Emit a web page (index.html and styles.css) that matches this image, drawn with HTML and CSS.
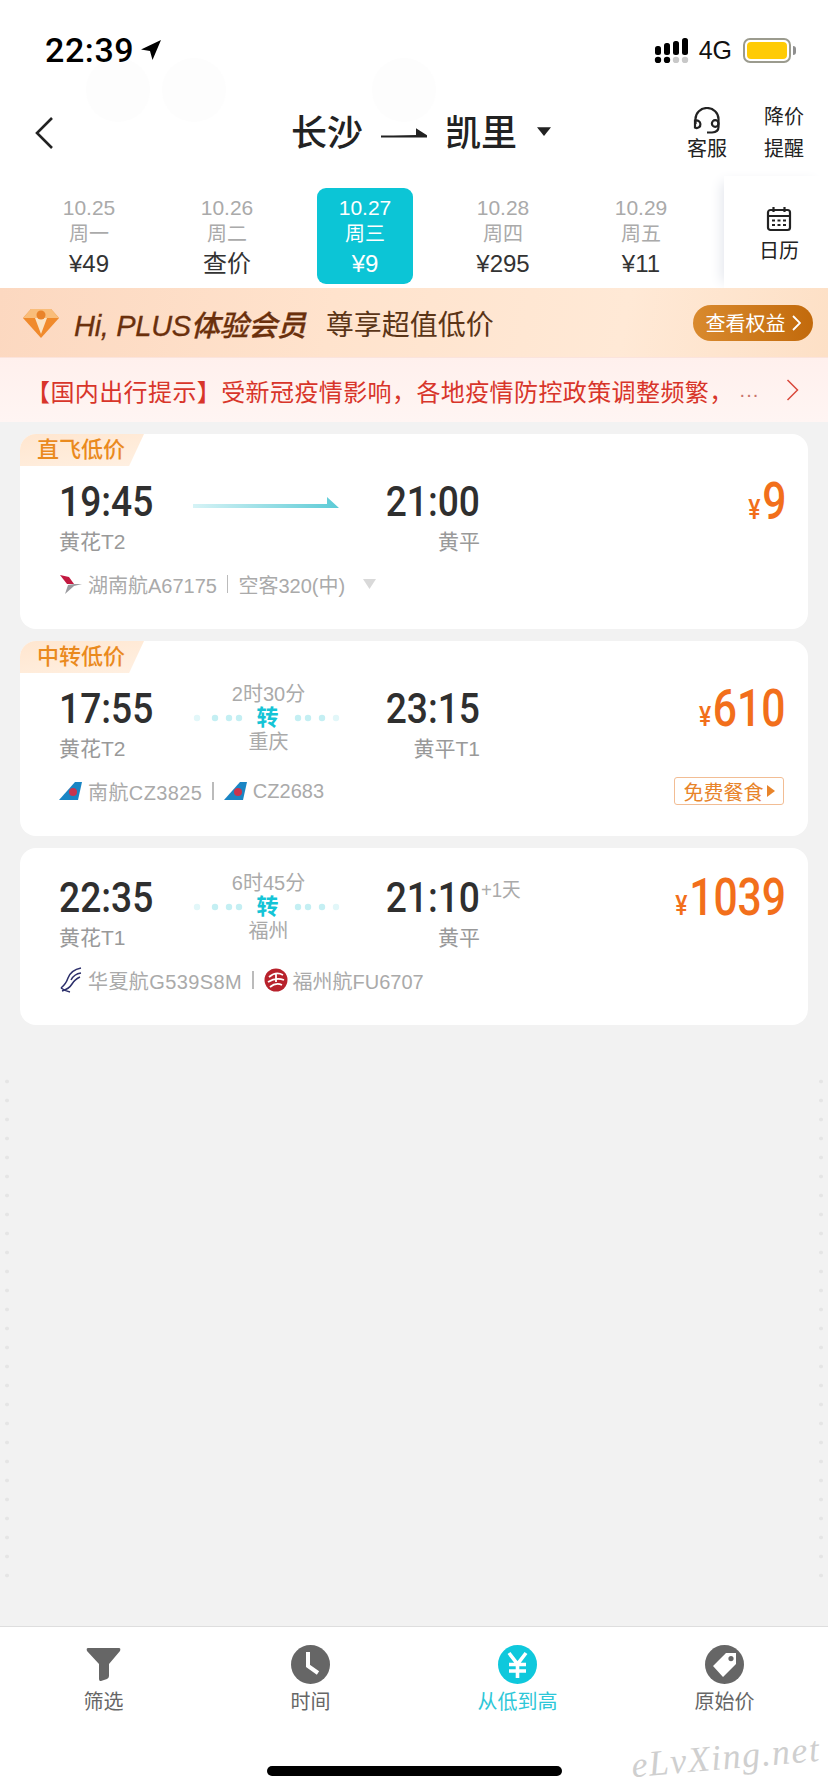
FILE: index.html
```html
<!DOCTYPE html>
<html lang="zh-CN">
<head>
  <meta charset="UTF-8">
  <title>长沙 - 凯里</title>
  <meta name="viewport" content="width=device-width, initial-scale=1">
  <link rel="stylesheet" href="styles.css">
</head>
<body>
  <div class="ghost ghost-a"></div>
  <div class="ghost ghost-b"></div>
  <div class="ghost ghost-c"></div>

  <div class="status-bar">
    <div class="status-left">
      <span class="clock">22:39</span>
      <svg class="loc-arrow" width="22" height="22" viewBox="0 0 22 22"><path d="M21 1 L1 10.5 L10 12 L12.5 21 Z" fill="#000"/></svg>
    </div>
    <div class="status-right">
      <svg width="36" height="26" viewBox="0 0 36 26">
        <rect x="1" y="9" width="6" height="9" rx="2.5" fill="#000"/>
        <rect x="10" y="6" width="6" height="12" rx="2.5" fill="#000"/>
        <rect x="19" y="4" width="6" height="14" rx="2.5" fill="#000"/>
        <rect x="28" y="1" width="6" height="17" rx="2.5" fill="#000"/>
        <circle cx="4" cy="23" r="3.2" fill="#000"/>
        <circle cx="13" cy="23" r="3.2" fill="#000"/>
        <circle cx="22" cy="23" r="3.2" fill="#c8c8c8"/>
        <circle cx="31" cy="23" r="3.2" fill="#c8c8c8"/>
      </svg>
      <span class="net">4G</span>
      <div class="battery"><div class="battery-fill"></div></div>
      <div class="battery-nub"></div>
    </div>
  </div>

  <header class="nav-header">
    <svg class="back" width="20" height="34" viewBox="0 0 20 34"><path d="M18 2 L3 17 L18 32" fill="none" stroke="#222" stroke-width="2.6"/></svg>
    <div class="route">
      <span>长沙</span>
      <svg width="46" height="14" viewBox="0 0 46 14"><path d="M0 9.5 H46 L36 3 V8" fill="#222" stroke="#222" stroke-width="2"/></svg>
      <span>凯里</span>
      <svg class="route-caret" width="14" height="11" viewBox="0 0 16 12"><path d="M0 1 H16 L8 11 Z" fill="#222"/></svg>
    </div>
    <div class="header-actions">
      <div class="action">
        <svg width="30" height="28" viewBox="0 0 30 28" fill="none" stroke="#222" stroke-width="2.2">
          <path d="M3.5 17 V12 A11.5 11 0 0 1 26.5 12 V20 Q26.5 25 20 25.5 H15"/>
          <path d="M3 12.5 V20.5 A3.6 3.6 0 0 0 8.4 17 A3.6 3.6 0 0 0 3 14"/>
          <circle cx="23.2" cy="16.5" r="3.3"/>
        </svg>
        <span>客服</span>
      </div>
      <div class="action action-text">
        <span>降价</span>
        <span>提醒</span>
      </div>
    </div>
  </header>

  <div class="date-strip">
    <div class="date-list">
      <div class="date-item"><span class="d">10.25</span><span class="w">周一</span><span class="p">¥49</span></div>
      <div class="date-item"><span class="d">10.26</span><span class="w">周二</span><span class="p">查价</span></div>
      <div class="date-item active"><span class="d">10.27</span><span class="w">周三</span><span class="p">¥9</span></div>
      <div class="date-item"><span class="d">10.28</span><span class="w">周四</span><span class="p">¥295</span></div>
      <div class="date-item"><span class="d">10.29</span><span class="w">周五</span><span class="p">¥11</span></div>
    </div>
    <div class="calendar">
      <svg width="26" height="26" viewBox="0 0 26 26" fill="none" stroke="#222" stroke-width="2.2">
        <rect x="2" y="4" width="22" height="20" rx="2.5"/>
        <path d="M2 10 H24 M7.5 1 V6 M18.5 1 V6"/>
        <path d="M6 14.5 H9 M11.5 14.5 H14.5 M17 14.5 H20 M6 19 H9 M11.5 19 H14.5 M17 19 H20" stroke-width="2"/>
      </svg>
      <span>日历</span>
    </div>
  </div>

  <div class="plus-banner">
    <svg class="gem" width="38" height="32" viewBox="0 0 38 32">
      <path d="M9 2 H29 L37 11 L19 31 L1 11 Z" fill="#f08a2c"/>
      <path d="M9 2 H29 L37 11 H1 Z" fill="#f9bd7a"/>
      <path d="M13 11 L19 27 L25 11 Z" fill="#fbe3c4"/>
      <circle cx="19" cy="8" r="4.5" fill="#e9832a"/>
    </svg>
    <span class="plus-hi">Hi, PLUS体验会员</span>
    <span class="plus-msg">尊享超值低价</span>
    <div class="plus-btn">查看权益
      <svg width="9" height="16" viewBox="0 0 9 16"><path d="M1 1 L8 8 L1 15" fill="none" stroke="#fff" stroke-width="1.8"/></svg>
    </div>
  </div>

  <div class="notice">
    <span class="notice-text">【国内出行提示】受新冠疫情影响，各地疫情防控政策调整频繁，</span>
    <span class="notice-more">...</span>
    <svg width="13" height="22" viewBox="0 0 13 22"><path d="M1.5 1 L11.5 11 L1.5 21" fill="none" stroke="#d9493c" stroke-width="1.5"/></svg>
  </div>

  <main class="flights">
    <div class="card tagged">
      <div class="tag">直飞低价</div>
      <div class="row">
        <div class="dep"><div class="time">19:45</div><div class="place">黄花T2</div></div>
        <div class="mid mid-direct">
          <svg width="147" height="14" viewBox="0 0 147 14"><defs><linearGradient id="arrowFade"><stop offset="0" stop-color="#d6f3f6"/><stop offset="1" stop-color="#5ccbd6"/></linearGradient></defs><path d="M0 8 H134 V1 L146 12 H0 Z" fill="url(#arrowFade)"/></svg>
        </div>
        <div class="arr"><div class="time">21:00</div><div class="place">黄平</div></div>
        <div class="price"><span class="price-num"><small>¥</small>9</span></div>
      </div>
      <div class="carrier">
        <svg class="logo" width="24" height="22" viewBox="0 0 24 22"><path d="M1 2 L10 4 L15 11 L8 11 Z" fill="#c2183f"/><path d="M6 21 L9 12 L15 11 L23 11 L15 13 Z" fill="#9a9a9f"/></svg>
        <span>湖南航A67175</span><i class="sep"></i><span>空客320(中)</span>
        <svg class="caret" width="13" height="10" viewBox="0 0 13 10"><path d="M0 0 H13 L6.5 10 Z" fill="#d9d9d9"/></svg>
      </div>
    </div>

    <div class="card tagged">
      <div class="tag">中转低价</div>
      <div class="row">
        <div class="dep"><div class="time">17:55</div><div class="place">黄花T2</div></div>
        <div class="mid">
          <div class="duration">2时30分</div>
          <div class="via">
            <svg width="50" height="8" viewBox="0 0 50 8"><circle cx="4" cy="4" r="3.2" fill="#e2f7f9"/><circle cx="22" cy="4" r="3.2" fill="#c4eff3"/><circle cx="36" cy="4" r="3.2" fill="#c4eff3"/><circle cx="46" cy="4" r="3.2" fill="#c4eff3"/></svg>
            <b>转</b>
            <svg width="46" height="8" viewBox="0 0 46 8"><circle cx="4" cy="4" r="3.2" fill="#c4eff3"/><circle cx="14" cy="4" r="3.2" fill="#c4eff3"/><circle cx="28" cy="4" r="3.2" fill="#c4eff3"/><circle cx="42" cy="4" r="3.2" fill="#e2f7f9"/></svg>
          </div>
          <div class="city">重庆</div>
        </div>
        <div class="arr"><div class="time">23:15</div><div class="place">黄平T1</div></div>
        <div class="price"><span class="price-num"><small>¥</small>610</span></div>
      </div>
      <div class="carrier">
        <svg class="logo" width="24" height="20" viewBox="0 0 24 20"><path d="M0 19 L16 1 H23 L19 19 Z" fill="#1a85c4"/><circle cx="14" cy="11" r="4" fill="#c9344d"/></svg>
        <span class="wide">南航CZ3825</span><i class="sep"></i>
        <svg class="logo" width="24" height="20" viewBox="0 0 24 20"><path d="M0 19 L16 1 H23 L19 19 Z" fill="#1a85c4"/><circle cx="14" cy="11" r="4" fill="#c9344d"/></svg>
        <span>CZ2683</span>
        <div class="meal">免费餐食<svg width="8" height="12" viewBox="0 0 8 12"><path d="M0 0 L8 6 L0 12 Z" fill="#e8842a"/></svg></div>
      </div>
    </div>

    <div class="card">
      <div class="row">
        <div class="dep"><div class="time">22:35</div><div class="place">黄花T1</div></div>
        <div class="mid">
          <div class="duration">6时45分</div>
          <div class="via">
            <svg width="50" height="8" viewBox="0 0 50 8"><circle cx="4" cy="4" r="3.2" fill="#e2f7f9"/><circle cx="22" cy="4" r="3.2" fill="#c4eff3"/><circle cx="36" cy="4" r="3.2" fill="#c4eff3"/><circle cx="46" cy="4" r="3.2" fill="#c4eff3"/></svg>
            <b>转</b>
            <svg width="46" height="8" viewBox="0 0 46 8"><circle cx="4" cy="4" r="3.2" fill="#c4eff3"/><circle cx="14" cy="4" r="3.2" fill="#c4eff3"/><circle cx="28" cy="4" r="3.2" fill="#c4eff3"/><circle cx="42" cy="4" r="3.2" fill="#e2f7f9"/></svg>
          </div>
          <div class="city">福州</div>
        </div>
        <div class="arr"><div class="time">21:10<span class="plus-day">+1天</span></div><div class="place">黄平</div></div>
        <div class="price"><span class="price-num"><small>¥</small>1039</span></div>
      </div>
      <div class="carrier">
        <svg class="logo" width="24" height="26" viewBox="0 0 24 26" fill="none" stroke="#2c2f6b" stroke-width="1.5"><path d="M22 1 Q12 3 9 11 Q7 17 2 21"/><path d="M22 6 Q15 7 12 13"/><path d="M21 10 Q16 12 13 17 Q10 22 3 24"/><path d="M2 21 Q6 24 11 25"/></svg>
        <span class="wide">华夏航G539S8M</span><i class="sep"></i>
        <svg class="logo" width="24" height="24" viewBox="0 0 24 24"><circle cx="12" cy="12" r="11.5" fill="#b8222c"/><path d="M5 9 Q12 3 19 7 M4 14 Q12 9 20 12 M6 19 Q12 14 18 17 M12 5 V14" fill="none" stroke="#fff" stroke-width="1.8"/></svg>
        <span>福州航FU6707</span>
      </div>
    </div>
  </main>

  <footer class="bottom">
    <div class="tabs">
      <div class="tab">
        <svg width="39" height="39" viewBox="0 0 39 39"><path d="M4 3 H35 Q37 3 36 6 L25 19 V31 Q25 33 23 34 L17 36 Q15 36.5 15 34 V19 L3 6 Q2 3 4 3 Z" fill="#666"/></svg>
        <span>筛选</span>
      </div>
      <div class="tab">
        <svg width="39" height="39" viewBox="0 0 39 39"><circle cx="19.5" cy="19.5" r="19.5" fill="#666"/><path d="M17 7 V21 L27 28" fill="none" stroke="#fff" stroke-width="4"/></svg>
        <span>时间</span>
      </div>
      <div class="tab on">
        <svg width="39" height="39" viewBox="0 0 39 39"><circle cx="19.5" cy="19.5" r="19.5" fill="#0fc8dc"/><path d="M11 8 L19.5 19 L28 8 M11 19.5 H28 M11 26 H28 M19.5 19 V33" fill="none" stroke="#fff" stroke-width="3.6"/></svg>
        <span>从低到高</span>
      </div>
      <div class="tab">
        <svg width="39" height="39" viewBox="0 0 39 39"><circle cx="19.5" cy="19.5" r="19.5" fill="#666"/><path d="M21 8 H31 V19 L18 32 L8 21 Z M26 11 A2.6 2.6 0 1 0 26 16.2 A2.6 2.6 0 1 0 26 11 Z" fill="#fff" fill-rule="evenodd"/></svg>
        <span>原始价</span>
      </div>
    </div>
    <div class="home-bar"></div>
    <div class="watermark">eLvXing.net</div>
  </footer>
</body>
</html>
```
FILE: styles.css
```css
* { box-sizing: border-box; }

body {
  margin: 0;
  width: 828px;
  height: 100vh;
  display: flex;
  flex-direction: column;
  position: relative;
  overflow: hidden;
  background: #fff;
  color: #222;
  font-family: "Liberation Sans", "Noto Sans CJK SC", sans-serif;
}

.ghost {
  position: absolute;
  top: 58px;
  width: 64px;
  height: 64px;
  border-radius: 50%;
  background: #fdfdfd;
}
.ghost-a { left: 86px; }
.ghost-b { left: 162px; }
.ghost-c { left: 372px; }

.status-bar {
  position: relative;
  height: 84px;
  padding: 32px 32px 0 45px;
  display: flex;
  justify-content: space-between;
  align-items: flex-start;
}
.status-left { display: flex; align-items: center; gap: 6px; }
.clock {
  font-family: Roboto, sans-serif;
  font-weight: 500;
  font-size: 34px;
  line-height: 36px;
  letter-spacing: 0.6px;
  color: #000;
}
.status-right { display: flex; align-items: center; padding-top: 4px; }
.net {
  font-size: 25px;
  line-height: 28px;
  margin: 0 11px 0 9px;
  color: #111;
}
.battery {
  width: 48px;
  height: 25px;
  border: 2px solid #9b9b8e;
  border-radius: 7px;
  padding: 2px;
}
.battery-fill { height: 100%; border-radius: 4px; background: #ffcb05; }
.battery-nub {
  width: 3px;
  height: 9px;
  margin-left: 2px;
  background: #8f8f8f;
  border-radius: 0 3px 3px 0;
}

.nav-header {
  position: relative;
  height: 92px;
  padding: 6px 24px 0 34px;
  display: flex;
  align-items: center;
}
.route {
  margin: 2px 0 0 237px;
  display: flex;
  align-items: center;
  font-size: 36px;
  font-weight: 500;
  line-height: 44px;
  color: #222;
}
.route svg { margin: 0 18px 0 18px; }
.route .route-caret { margin: 0 0 6px 20px; }
.header-actions { margin-left: auto; display: flex; gap: 37px; align-items: flex-end; }
.action {
  display: flex;
  flex-direction: column;
  align-items: center;
  font-size: 20px;
  line-height: 28px;
  color: #222;
}
.action-text { gap: 4px; }

.date-strip { height: 112px; display: flex; }
.date-list { display: flex; flex: 1; padding: 12px 0 4px 20px; }
.date-item {
  width: 138px;
  display: flex;
  flex-direction: column;
  align-items: center;
  padding-top: 7px;
  color: #aaa;
  font-size: 20px;
}
.date-item .d { font-size: 21px; line-height: 26px; }
.date-item .w { line-height: 26px; }
.date-item .p { font-size: 24px; line-height: 32px; color: #333; margin-top: 1px; }
.date-item.active {
  width: 96px;
  margin: 0 21px;
  background: #0cc5d6;
  border-radius: 9px;
  color: #fff;
}
.date-item.active .p { color: #fff; }
.calendar {
  width: 104px;
  display: flex;
  flex-direction: column;
  align-items: center;
  padding: 30px 0 0 6px;
  gap: 5px;
  font-size: 20px;
  line-height: 28px;
  box-shadow: -8px 0 12px -6px #e2e5ec;
  color: #222;
}

.plus-banner {
  height: 69px;
  padding: 0 15px 0 22px;
  display: flex;
  align-items: center;
  background: linear-gradient(100deg, #fcd8c0 0%, #ffe3cd 40%, #ffe9d6 75%, #fde0c6 100%);
}
.plus-hi {
  margin-left: 14px;
  font-size: 29px;
  font-style: italic;
  font-weight: 500;
  color: #6b300c;
  letter-spacing: -0.3px;
  -webkit-text-stroke: 0.3px #6b300c;
}
.plus-msg { margin-left: 20px; font-size: 28px; color: #5b3517; }
.plus-btn {
  margin-left: auto;
  height: 36px;
  width: 120px;
  border-radius: 18px;
  background: linear-gradient(90deg, #d98a2e, #c26a0c);
  color: #fff;
  font-size: 20px;
  display: flex;
  align-items: center;
  justify-content: center;
  gap: 6px;
}

.notice {
  height: 65px;
  padding: 0 29px 0 26px;
  display: flex;
  align-items: center;
  background: linear-gradient(180deg, #fff0ed, #fff5f3);
  border-top: 1px solid #fbe3dc;
  color: #d8352a;
  font-size: 24px;
}
.notice-text { white-space: nowrap; letter-spacing: 0.4px; }
.notice-more { margin-left: 6px; color: #c9756c; font-size: 20px; letter-spacing: 1px; }
.notice svg { margin-left: auto; }

.flights {
  position: relative;
  flex: 1;
  padding: 12px 20px;
  display: flex;
  flex-direction: column;
  gap: 12px;
  background: #f2f2f2;
}
.flights::before, .flights::after {
  content: "";
  position: absolute;
  top: 650px;
  bottom: 36px;
  width: 14px;
  background: radial-gradient(circle, #e5e5e5 1.6px, transparent 2.2px) 0 0 / 14px 19px repeat-y;
}
.flights::before { left: 0; }
.flights::after { right: 0; }
.card {
  position: relative;
  background: #fff;
  border-radius: 16px;
  padding: 30px 24px 0 39px;
  height: 177px;
}
.card.tagged { padding-top: 48px; height: 195px; }
.tag {
  position: absolute;
  left: 0;
  top: 0;
  width: 124px;
  height: 32px;
  padding-left: 17px;
  font-size: 22px;
  font-weight: 500;
  line-height: 31px;
  color: #ea8a1e;
  background: linear-gradient(170deg, #ffe6cf, #fff0e2);
  border-radius: 16px 0 0 0;
  clip-path: polygon(0 0, 100% 0, 88% 100%, 0 100%);
}

.row { display: flex; }
.dep { width: 134px; }
.mid { width: 147px; margin-top: -7px; text-align: center; padding-left: 4px; }
.mid-direct { padding: 21px 0 0; line-height: 0; }
.arr { width: 140px; text-align: right; }
.time {
  position: relative;
  font-family: Roboto, sans-serif;
  font-weight: 500;
  font-size: 42px;
  line-height: 40px;
  color: #2f2f2f;
  transform: scaleX(0.885);
  transform-origin: left center;
  white-space: nowrap;
}
.arr .time { transform-origin: right center; }
.place {
  margin-top: 6px;
  font-size: 21px;
  line-height: 28px;
  color: #999;
}
.plus-day {
  position: absolute;
  left: 100%;
  top: 0;
  margin-left: 1px;
  font-family: "Liberation Sans", "Noto Sans CJK SC", sans-serif;
  font-weight: 400;
  font-size: 20px;
  line-height: 24px;
  color: #aaa;
  transform: scaleX(1.05);
  transform-origin: left center;
}
.duration, .city { font-size: 20px; line-height: 24px; color: #aaa; }
.via {
  display: flex;
  align-items: center;
  justify-content: space-between;
  height: 24px;
  margin-left: -4px;
  font-size: 22px;
  line-height: 22px;
  color: #14c4d6;
}
.via b { font-weight: 700; margin-left: -2px; }
.price { flex: 1; text-align: right; margin-right: -2px; }
.price-num {
  display: inline-block;
  font-family: Roboto, sans-serif;
  font-weight: 500;
  font-size: 52px;
  line-height: 40px;
  color: #f26f1b;
  transform: scaleX(0.82);
  transform-origin: right center;
}
.price-num small { font-size: 28px; margin-right: 2px; }

.carrier {
  margin-top: 15px;
  height: 26px;
  display: flex;
  align-items: center;
  gap: 5px;
  font-size: 20px;
  color: #aaa;
}
.carrier .logo { flex: none; }
.wide { letter-spacing: 0.4px; }
.sep {
  width: 1.5px;
  height: 18px;
  margin: 0 5px;
  background: #bbb;
}
.caret { margin-left: 13px; }
.meal {
  margin-left: auto;
  height: 28px;
  width: 110px;
  border: 1px solid #f2bd94;
  border-radius: 3px;
  color: #e8842a;
  display: flex;
  align-items: center;
  justify-content: center;
  gap: 3px;
}

.bottom {
  position: relative;
  height: 166px;
  background: #fff;
  border-top: 1px solid #dedede;
  display: flex;
  flex-direction: column;
}
.tabs { display: flex; padding-top: 18px; }
.tab {
  width: 207px;
  display: flex;
  flex-direction: column;
  align-items: center;
  gap: 5px;
  font-size: 20px;
  line-height: 26px;
  color: #666;
}
.tab.on { color: #2dc7d8; }
.home-bar {
  width: 295px;
  height: 10px;
  margin: auto auto 16px;
  background: #000;
  border-radius: 5px;
}
.watermark {
  position: absolute;
  right: 8px;
  bottom: 14px;
  font-family: "Liberation Serif", serif;
  font-style: italic;
  font-size: 36px;
  letter-spacing: 1.5px;
  color: #cfcfcf;
  transform: rotate(-5deg);
}
```
